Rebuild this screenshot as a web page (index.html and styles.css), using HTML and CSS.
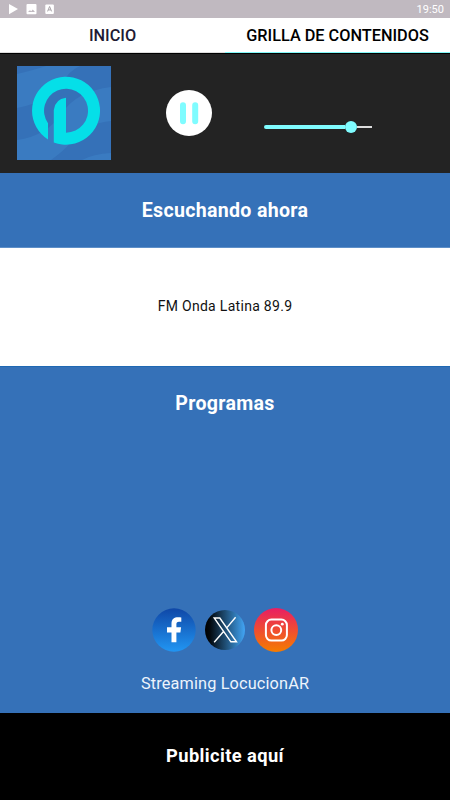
FILE: index.html
```html
<!DOCTYPE html>
<html lang="es">
<head>
  <meta charset="UTF-8">
  <meta name="viewport" content="width=device-width, initial-scale=1">
  <title>FM Onda Latina 89.9</title>
  <link rel="stylesheet" href="styles.css">
</head>
<body>
  <div class="status-bar">
    <svg class="status-icons" width="60" height="18" viewBox="0 0 60 18" fill="#fff">
      <path d="M9 4V14.200l9-5.100z"/>
      <path fill-rule="evenodd" d="M27.500 4h8a1 1 0 0 1 1 1v8.200a1 1 0 0 1-1 1h-8a1 1 0 0 1-1-1V5a1 1 0 0 1 1-1zm.5 8h7l-2.200-2.600-1.500 1.800-1.400-1z"/>
      <rect x="45.300" y="4.500" width="8.600" height="9.400" rx="1"/>
      <path d="M47.600 11.400l2-4.900 2 4.900M48.300 9.900h2.600" fill="none" stroke="#a9a4a9" stroke-width="1"/>
    </svg>
    <span class="clock">19:50</span>
  </div>

  <nav class="tabs">
    <a class="tab">INICIO</a>
    <a class="tab active">GRILLA DE CONTENIDOS</a>
  </nav>

  <section class="player">
    <svg class="logo" width="94" height="94" viewBox="0 0 94 94">
      <rect width="94" height="94" fill="#3a7bc1"/>
      <path d="M94 21Q60 25 45 47Q30 70 0 74V42Q32 36 46 16Q52 5 63 0H94z" fill="#3571b8"/>
      <path d="M0 0H29Q17 4 0 8z" fill="#3571b8"/>
      <path d="M34 94Q48 84 57 73Q70 57 94 55V87Q76 88 65 94z" fill="#3571b8"/>
      <path d="M31 73.500A34 34 0 1 1 36.800 76.400V44Q38 33 49 31.700V66.700A22 22 0 1 0 31 57.300z" fill="#05dfe8"/>
    </svg>
    <svg class="pause" width="46" height="46" viewBox="0 0 46 46">
      <circle cx="23" cy="23" r="23" fill="#fff"/>
      <path d="M17 15.300v16M29.200 15.300v16" stroke="#7ffcff" stroke-width="6" stroke-linecap="round"/>
    </svg>
    <div class="volume">
      <div class="level"></div>
      <div class="knob"></div>
      <div class="rest"></div>
    </div>
  </section>

  <section class="now-title"><h2>Escuchando ahora</h2></section>
  <section class="now-playing"><p>FM Onda Latina 89.9</p></section>

  <section class="programs">
    <h2>Programas</h2>
    <div class="bottom">
      <div class="social">
        <svg width="44" height="44" viewBox="0 0 44 44">
          <defs><linearGradient id="fb" x2="0" y2="1"><stop stop-color="#0f47a7"/><stop offset="1" stop-color="#2196f3"/></linearGradient></defs>
          <circle cx="22" cy="22" r="21.700" fill="url(#fb)"/>
          <path d="M19.500 34.200V24.500h-4.500v-5.300h4.500v-3.500c0-4.600 2.800-6.400 6.500-6.400 1.300 0 2.500.1 3.300.3v4.200h-2.300c-2 0-2.600.9-2.600 2.500v2.900h4.700l-.7 5.300h-4v9.700z" fill="#fff"/>
        </svg>
        <svg width="40" height="40" viewBox="0 0 40 40">
          <defs><linearGradient id="xg"><stop stop-color="#000"/><stop offset=".12" stop-color="#03080d"/><stop offset="1" stop-color="#42a5f5"/></linearGradient></defs>
          <circle cx="20" cy="20" r="20" fill="url(#xg)"/>
          <path d="M9.200 8H14.800l16.700 23.800h-5.600zM30.600 7.300L21.300 18.400M18.300 21.800L9.200 32.300" fill="none" stroke="#fff" stroke-width="1.400"/>
        </svg>
        <svg width="44" height="44" viewBox="0 0 44 44">
          <defs><linearGradient id="ig" x2="0" y2="1"><stop stop-color="#e91e63"/><stop offset="1" stop-color="#f57c00"/></linearGradient></defs>
          <circle cx="22" cy="22" r="22" fill="url(#ig)"/>
          <g fill="none" stroke="#fff" stroke-width="2">
            <rect x="11.900" y="11.600" width="21" height="21" rx="5.500"/>
            <circle cx="22.300" cy="22.100" r="4.900"/>
          </g>
          <circle cx="28.300" cy="16.200" r="1.400" fill="#fff"/>
        </svg>
      </div>
      <p class="credit">Streaming LocucionAR</p>
    </div>
  </section>

  <footer class="advert"><h2>Publicite aquí</h2></footer>
</body>
</html>
```
FILE: styles.css
```css
* {
  box-sizing: border-box;
  margin: 0;
  padding: 0;
}

body {
  font-family: Roboto, "Liberation Sans", sans-serif;
  background: #000;
  color: #fff;
  height: 800px;
  display: flex;
  flex-direction: column;
}

/* Barra de estado */
.status-bar {
  height: 18px;
  background: #c0b9c0;
  display: flex;
  justify-content: space-between;
  align-items: center;
  padding-right: 6px;
}

.clock {
  font-size: 11px;
}

/* Pestañas */
.tabs {
  height: 36px;
  display: flex;
  background: #fff;
  border-bottom: 1px solid #000;
}

.tab {
  flex: 1;
  text-align: center;
  font-size: 16.3px;
  font-weight: 500;
  line-height: 35px;
  color: #211a33;
  border-bottom: 1px solid #ddd;
}

.tab.active {
  color: #000;
  border-bottom-color: #7ff8f8;
}

/* Reproductor */
.player {
  height: 119px;
  background: #232323;
  display: flex;
  align-items: flex-start;
  padding: 12px 0 0 17px;
}

.pause {
  margin: 24px 0 0 55px;
}

.volume {
  width: 108px;
  margin: 55px 0 0 52px;
  display: flex;
  align-items: center;
}

.level {
  width: 81px;
  height: 4px;
  border-radius: 2px 0 0 2px;
  background: #7ffcff;
}

.knob {
  width: 12px;
  height: 12px;
  border-radius: 50%;
  background: #7ffcff;
}

.rest {
  flex: 1;
  height: 2px;
  background: #ddd;
}

/* Secciones */
h2 {
  font-size: 19.6px;
  font-weight: 700;
  line-height: 24px;
  letter-spacing: 0.3px;
  text-align: center;
}

.now-title {
  height: 75px;
  padding-top: 26px;
  background: #3571b8;
  border-bottom: 1px solid #5e8fc8;
}

.now-playing {
  height: 118px;
  display: flex;
  align-items: center;
  justify-content: center;
  background: #fff;
  color: #111;
  font-size: 14px;
  line-height: 18px;
  letter-spacing: 0.3px;
  padding-bottom: 2px;
}

.programs {
  height: 347px;
  padding: 25px 0 18px;
  background: #3571b8;
  border-top: 1px solid #1e68b3;
  display: flex;
  flex-direction: column;
  justify-content: space-between;
}

.social {
  display: flex;
  justify-content: center;
  align-items: center;
  gap: 9px;
}

.credit {
  margin-top: 21px;
  text-align: center;
  font-size: 16.3px;
  line-height: 22px;
  letter-spacing: 0.15px;
  color: #edf4fc;
}

.advert {
  flex: 1;
  padding-top: 31px;
}

.advert h2 {
  font-size: 18.3px;
  letter-spacing: 0.4px;
}
```
